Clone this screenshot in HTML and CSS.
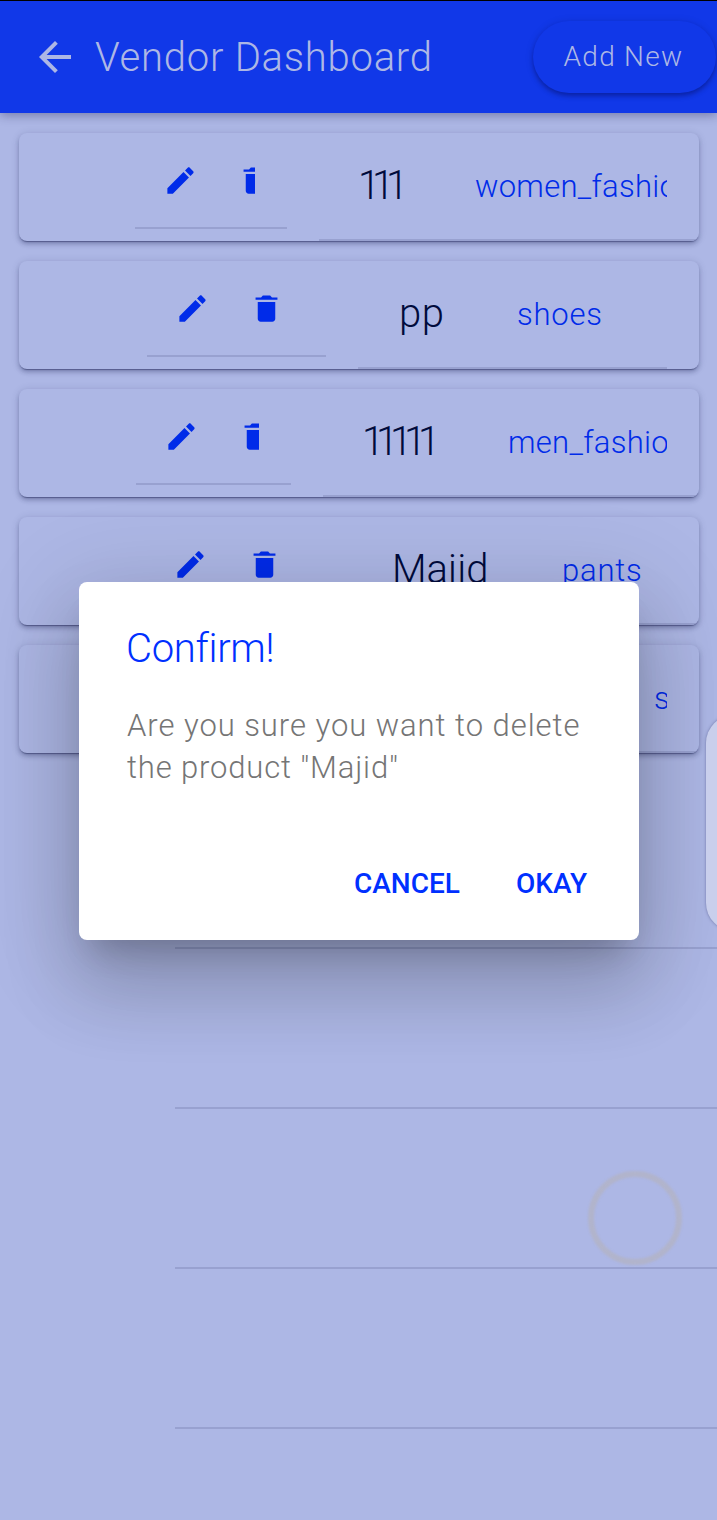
FILE: index.html
```
<!DOCTYPE html>
<html lang="en">
<head>
<meta charset="utf-8">
<title>Vendor Dashboard</title>
<link rel="stylesheet" href="styles.css">
</head>
<body>
<svg class="defs" aria-hidden="true">
  <symbol id="pencil" viewBox="0 0 512 512"><path d="M64 368v80h80l235.727-235.729-79.999-79.998L64 368zm377.602-217.602c8.531-8.531 8.531-21.334 0-29.865l-50.135-50.135c-8.531-8.531-21.334-8.531-29.865 0l-39.468 39.469 79.999 79.998 39.469-39.467z"/></symbol>
  <symbol id="trash" viewBox="0 0 512 512"><path d="M128 405.429C128 428.846 147.198 448 170.667 448h170.667C364.802 448 384 428.846 384 405.429V160H128v245.429zM416 96h-80l-26.785-32H202.786L176 96H96v32h320V96z"/></symbol>
</svg>
<div class="screen">
  <header class="bar">
    <svg class="back" viewBox="0 0 32 32"><path d="M32 14v4H7.6l11.2 11.2L16 32 0 16 16 0l2.8 2.8L7.6 14z"/></svg>
    <h1 class="title">Vendor Dashboard</h1>
    <button class="add">Add New</button>
  </header>
  <main class="content">
    <section class="card row-a">
      <div class="actions"><div class="icons"><svg><use href="#pencil"/></svg><svg><use href="#trash"/></svg></div></div>
      <div class="info"><span class="name digits">111</span><span class="category long">women_fashion</span></div>
    </section>
    <section class="card row-b">
      <div class="actions"><div class="icons"><svg><use href="#pencil"/></svg><svg><use href="#trash"/></svg></div></div>
      <div class="info"><span class="name">pp</span><span class="category">shoes</span></div>
    </section>
    <section class="card row-c">
      <div class="actions"><div class="icons"><svg><use href="#pencil"/></svg><svg><use href="#trash"/></svg></div></div>
      <div class="info"><span class="name digits">11111</span><span class="category long">men_fashion</span></div>
    </section>
    <section class="card row-d">
      <div class="actions"><div class="icons"><svg><use href="#pencil"/></svg><svg><use href="#trash"/></svg></div></div>
      <div class="info"><span class="name">Majid</span><span class="category">pants</span></div>
    </section>
    <section class="card row-e">
      <div class="actions"></div>
      <div class="info"><span class="name"></span><span class="category">shoes</span></div>
    </section>
    <div class="list">
      <div class="slot"></div><div class="slot"></div><div class="slot"></div><div class="slot"></div>
    </div>
  </main>
  <div class="dialog" role="alertdialog">
    <h2 class="dialog-title">Confirm!</h2>
    <p class="message"><span class="line">Are you sure you want to delete</span><span class="line second">the product "Majid"</span></p>
    <div class="buttons"><button class="cancel">CANCEL</button><button class="okay">OKAY</button></div>
  </div>
  <div class="handle"></div>
  <div class="touch"></div>
</div>
</body>
</html>
```
FILE: styles.css
```
* { box-sizing: border-box; }
body { margin: 0; font-family: Roboto, "Liberation Sans", sans-serif; font-weight: 300; }
h1, h2, p { margin: 0; font-weight: 300; }
button { border: 0; padding: 0; background: none; font: inherit; white-space: nowrap; }
.defs { display: none; }
.screen { position: relative; width: 717px; height: 1520px; overflow: hidden; background: #adb7e5; border-top: 1px solid #000; }

.bar { display: flex; align-items: center; height: 112px; padding: 0 1px 0 39px; background: #1138e8; box-shadow: 0 2px 10px rgba(30, 30, 80, .4); }
.back { width: 32px; height: 32px; fill: #adb7e5; }
.title { flex: 1; margin-left: 24px; font-size: 40px; line-height: 111px; color: #adb7e5; white-space: nowrap; letter-spacing: .75px; }
.add { width: 183px; height: 72px; padding: 0 2px 2px 0; border-radius: 36px; background: #1138e8; color: #adb7e5; font-size: 28px; letter-spacing: 1.3px; box-shadow: 0 3px 4px rgba(0, 0, 60, .3), 0 1px 9px rgba(0, 0, 60, .14); }

.content { padding: 20px 18px 0 19px; }
.card { display: flex; height: 108px; margin-bottom: 20px; border-radius: 8px; overflow: hidden; background: #adb7e5; box-shadow: 0 2px 1px -1px rgba(30, 35, 85, .45), 0 3px 4px rgba(30, 35, 85, .28), 0 1px 8px rgba(30, 35, 85, .14); }
.actions { flex: none; height: 96px; width: var(--actions); margin: 0 32px 0 var(--start); padding: 29.5px 32px 0 27.5px; border-bottom: 2px solid #98a1d0; }
.icons { display: flex; gap: 39px; overflow: hidden; }
.icons svg { flex: none; width: 35px; height: 35px; fill: #002be9; }
.info { flex: 1; min-width: 0; display: flex; margin-right: var(--end, 0px); padding: 0 calc(32px - var(--end, 0px)) 0 40px; border-bottom: 2px solid #98a1d0; }
.name { flex: none; width: var(--name); font-size: 40px; line-height: 105px; color: #000b3c; }
.digits { text-indent: -1px; letter-spacing: -8.2px; }
.category { flex: 1; min-width: 0; overflow: hidden; font-size: 31px; line-height: 107px; color: #002be9; white-space: nowrap; letter-spacing: .8px; }
.category.long { letter-spacing: .3px; }
.row-a { --start: 116px; --actions: 152px; --name: 116px; }
.row-b { --start: 128px; --actions: 179px; --name: 119px; --end: 32px; }
.row-b .name { padding-left: 1px; letter-spacing: .5px; }
.row-c { --start: 117px; --actions: 155px; --name: 145px; }
.row-d { --start: 126px; --actions: 175px; --name: 170px; }
.row-e { --start: 127px; --actions: 200px; --name: 236px; }

.list { margin: 36px -18px 0 156px; }
.slot { height: 160px; border-bottom: 2px solid #98a1d0; }

.dialog { position: absolute; left: 79px; top: 581px; width: 560px; height: 358px; padding: 42px 52px 0 48px; border-radius: 8px; background: #fff; box-shadow: 0 22px 30px -14px rgba(0, 0, 0, .2), 0 48px 76px 6px rgba(0, 0, 0, .14), 0 18px 92px 16px rgba(0, 0, 0, .12); }
.dialog-title { margin-left: -1px; font-size: 40px; line-height: 50px; color: #0030ff; letter-spacing: -.3px; }
.message { margin-top: 31px; font-size: 31px; line-height: 42px; color: #757575; white-space: nowrap; letter-spacing: .95px; }
.line { display: block; }
.second { letter-spacing: .85px; }
.buttons { display: flex; justify-content: flex-end; gap: 56px; margin-top: 77px; font-size: 28px; line-height: 36px; font-weight: 500; color: #0030ff; }
.buttons button { color: inherit; }

.handle { position: absolute; left: 706px; top: 714px; width: 60px; height: 216px; border-radius: 28px; background: #c9cfec; box-shadow: 0 0 3px rgba(50, 55, 110, .5); }
.touch { position: absolute; left: 588px; top: 1170px; width: 94px; height: 94px; border-radius: 50%; border: 6px solid rgba(179, 179, 195, .75); filter: blur(1.3px); }
```
